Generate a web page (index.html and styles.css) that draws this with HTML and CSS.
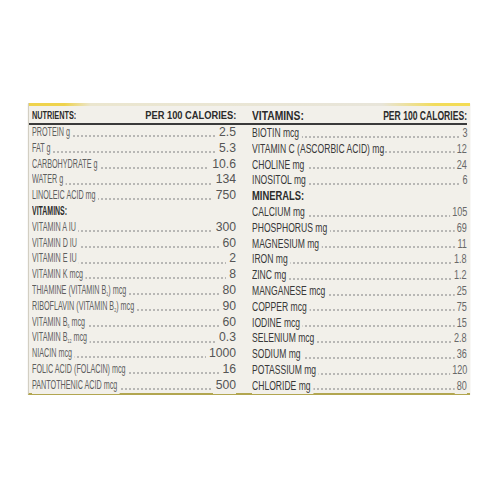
FILE: index.html
```html
<!DOCTYPE html>
<html>
<head>
<meta charset="utf-8">
<link rel="stylesheet" href="styles.css">
</head>
<body>
<div class="label">
  <div class="band"></div>
  <div class="head">
    <div class="hcell left">
      <span class="ht hl nut">NUTRIENTS:</span>
      <span class="ht hr per-l">PER 100 CALORIES:</span>
    </div>
    <div class="hcell right">
      <span class="ht hl vit">VITAMINS:</span>
      <span class="ht hr per-r">PER 100 CALORIES:</span>
    </div>
  </div>
  <div class="cols">
    <div class="col left">
      <div class="row"><span class="k">PROTEIN g</span><span class="v">2.5</span></div>
      <div class="row"><span class="k">FAT g</span><span class="v">5.3</span></div>
      <div class="row"><span class="k">CARBOHYDRATE g</span><span class="v">10.6</span></div>
      <div class="row"><span class="k">WATER g</span><span class="v">134</span></div>
      <div class="row"><span class="k">LINOLEIC ACID mg</span><span class="v">750</span></div>
      <div class="row sec"><span class="k">VITAMINS:</span></div>
      <div class="row"><span class="k">VITAMIN A IU</span><span class="v">300</span></div>
      <div class="row"><span class="k">VITAMIN D IU</span><span class="v">60</span></div>
      <div class="row"><span class="k">VITAMIN E IU</span><span class="v">2</span></div>
      <div class="row"><span class="k">VITAMIN K mcg</span><span class="v">8</span></div>
      <div class="row"><span class="k">THIAMINE (VITAMIN B<sub class="s">1</sub>) mcg</span><span class="v">80</span></div>
      <div class="row"><span class="k">RIBOFLAVIN (VITAMIN B<sub class="s">2</sub>) mcg</span><span class="v">90</span></div>
      <div class="row"><span class="k">VITAMIN B<sub class="s">6</sub> mcg</span><span class="v">60</span></div>
      <div class="row"><span class="k">VITAMIN B<sub class="s">12</sub> mcg</span><span class="v">0.3</span></div>
      <div class="row"><span class="k">NIACIN mcg</span><span class="v">1000</span></div>
      <div class="row"><span class="k">FOLIC ACID (FOLACIN) mcg</span><span class="v">16</span></div>
      <div class="row"><span class="k">PANTOTHENIC ACID mcg</span><span class="v">500</span></div>
    </div>
    <div class="col right">
      <div class="row"><span class="k">BIOTIN mcg</span><span class="v">3</span></div>
      <div class="row"><span class="k">VITAMIN C (ASCORBIC ACID) mg</span><span class="v">12</span></div>
      <div class="row"><span class="k">CHOLINE mg</span><span class="v">24</span></div>
      <div class="row"><span class="k">INOSITOL mg</span><span class="v">6</span></div>
      <div class="row sec"><span class="k">MINERALS:</span></div>
      <div class="row"><span class="k">CALCIUM mg</span><span class="v">105</span></div>
      <div class="row"><span class="k">PHOSPHORUS mg</span><span class="v">69</span></div>
      <div class="row"><span class="k">MAGNESIUM mg</span><span class="v">11</span></div>
      <div class="row"><span class="k">IRON mg</span><span class="v">1.8</span></div>
      <div class="row"><span class="k">ZINC mg</span><span class="v">1.2</span></div>
      <div class="row"><span class="k">MANGANESE mcg</span><span class="v">25</span></div>
      <div class="row"><span class="k">COPPER mcg</span><span class="v">75</span></div>
      <div class="row"><span class="k">IODINE mcg</span><span class="v">15</span></div>
      <div class="row"><span class="k">SELENIUM mcg</span><span class="v">2.8</span></div>
      <div class="row"><span class="k">SODIUM mg</span><span class="v">36</span></div>
      <div class="row"><span class="k">POTASSIUM mg</span><span class="v">120</span></div>
      <div class="row"><span class="k">CHLORIDE mg</span><span class="v">80</span></div>
    </div>
  </div>
</div>
</body>
</html>
```

FILE: styles.css
```css
html, body {
  margin: 0;
  background: #ffffff;
}
body {
  font-family: "Liberation Sans", Arial, sans-serif;
}
.label {
  margin: 103px 0 0 28px;
  width: 442px;
  height: 292px;
  box-sizing: border-box;
  background: #f2f0ea;
  border-left: 1px solid #d3cfc3;
  border-bottom: 2px solid #b2a650;
  box-shadow: 0 1px 1px rgba(120, 110, 60, 0.25);
}
.band {
  height: 3px;
  background: linear-gradient(to right, #efd34c 0, #efd34c 8%, #ebe6cf 14%, #e8e5da 80%, #f2dc5c 92%, #f4dc52 100%);
}
.head {
  display: grid;
  grid-template-columns: 204px 215px;
  column-gap: 16px;
  height: 17px;
  padding-left: 3px;
  margin-right: 3px;
  border-bottom: 2px solid #3a3a3a;
}
.hcell {
  display: flex;
  justify-content: space-between;
  align-items: flex-end;
  padding-bottom: 1px;
}
.ht {
  display: inline-block;
  font-weight: bold;
  color: #2b2b2b;
  white-space: nowrap;
  line-height: 1;
}
.hcell.left .ht { font-size: 11.8px; }
.hcell.right .ht { font-size: 13.2px; }
.hl { transform-origin: left bottom; }
.hr { transform-origin: right bottom; }
.nut { transform: scaleX(0.62); }
.per-l { transform: scaleX(0.79); }
.vit { transform: scaleX(0.78); }
.per-r { transform: scaleX(0.65); }

.cols {
  display: grid;
  grid-template-columns: 204px 215px;
  column-gap: 16px;
  padding-left: 3px;
}
.row {
  display: flex;
  justify-content: space-between;
  align-items: baseline;
  height: 15.8px;
  line-height: 15.8px;
  white-space: nowrap;
  background-image: radial-gradient(circle, #939393 0.55px, transparent 0.95px);
  background-size: 4px 2px;
  background-repeat: repeat-x;
}
.row.sec { background: none; }
.k {
  display: inline-block;
  min-width: 0;
  background: #f2f0ea;
  padding-right: 4px;
  transform-origin: left center;
}
.v {
  display: inline-block;
  flex-shrink: 0;
  background: #f2f0ea;
  padding-left: 3px;
  transform-origin: right center;
}
.s {
  font-size: 6px;
  line-height: 0;
  vertical-align: -2px;
}

.col.left .row {
  font-size: 12px;
  color: #5e5e5e;
  background-position: 0 10.2px;
}
.col.left .k { transform: scaleX(0.6); }
.col.left .v { font-size: 12.2px; color: #555555; }
.col.left .sec .k { font-weight: bold; color: #2b2b2b; transform: scaleX(0.58); }

.col.right .row {
  font-size: 13.4px;
  color: #383838;
  background-position: 0 10.7px;
}
.col.right .k { transform: scaleX(0.64); }
.col.right .v { color: #686868; transform: scaleX(0.68); }
.col.right .sec .k { font-weight: bold; color: #2b2b2b; transform: scaleX(0.7); }
```
